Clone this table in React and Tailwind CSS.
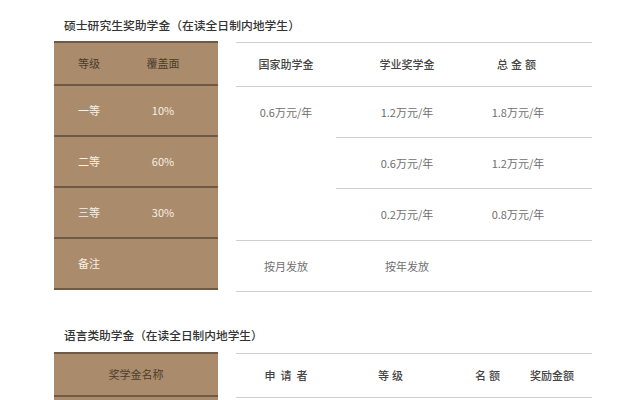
const font = { fontFamily: '"Noto Sans CJK SC", "Noto Sans", sans-serif' };

const grades = [
  { name: "一等", cover: "10%", study: "1.2万元/年", total: "1.8万元/年" },
  { name: "二等", cover: "60%", study: "0.6万元/年", total: "1.2万元/年" },
  { name: "三等", cover: "30%", study: "0.2万元/年", total: "0.8万元/年" },
];

function BrownRow({ left, right, head, tall }) {
  return (
    <div
      className={`flex items-center border-b-2 border-[#6e5a45] ${
        tall ? "h-[43px]" : "h-[51px]"
      } ${head ? "text-[#4b3c2d]" : "text-[#f6efe4]"}`}
    >
      <div className="w-[70px] text-center">{left}</div>
      <div className="w-[74px] ml-[2px] text-center">{right}</div>
    </div>
  );
}

export default function App() {
  return (
    <div
      className="w-[640px] h-[400px] overflow-hidden bg-white pl-[54px] pt-[16px]"
      style={font}
    >
      {/* 硕士研究生奖助学金 */}
      <h2 className="ml-[10px] text-[11.8px] leading-[18px] font-medium text-[#333]">
        硕士研究生奖助学金（在读全日制内地学生）
      </h2>

      <div className="mt-[7px] flex items-start text-[11px]">
        <div className="w-[164px] bg-[#aa8c6c] border-t-2 border-[#6e5a45]">
          <BrownRow left="等级" right="覆盖面" head tall />
          {grades.map((g) => (
            <BrownRow key={g.name} left={g.name} right={g.cover} />
          ))}
          <BrownRow left="备注" right="" />
        </div>

        <div className="ml-[18px] w-[356px] mt-[1px] border-t-[1.5px] border-[#cfcfcf] text-[#6f6f6f]">
          <div className="flex h-[44px] items-center border-b-[1.5px] border-[#cfcfcf] text-[#444] font-medium">
            <div className="w-[100px] text-center">国家助学金</div>
            <div className="w-[142px] text-center">学业奖学金</div>
            <div className="w-[80px] text-center tracking-[3px]">总金额</div>
          </div>

          <div className="flex border-b-[1.5px] border-[#cfcfcf]">
            <div className="w-[100px] pt-[17px] text-center">0.6万元/年</div>
            <div className="flex-1">
              {grades.map((g, i) => (
                <div
                  key={g.name}
                  className={`flex h-[51px] items-center ${
                    i < 2 ? "border-b-[1.5px] border-[#cfcfcf]" : ""
                  }`}
                >
                  <div className="w-[142px] text-center">{g.study}</div>
                  <div className="w-[80px] text-center">{g.total}</div>
                </div>
              ))}
            </div>
          </div>

          <div className="flex h-[51px] items-center border-b-[1.5px] border-[#cfcfcf]">
            <div className="w-[100px] text-center">按月发放</div>
            <div className="w-[142px] text-center">按年发放</div>
          </div>
        </div>
      </div>

      {/* 语言类助学金 */}
      <h2 className="mt-[34px] ml-[10px] text-[11.7px] leading-[18px] font-medium text-[#333]">
        语言类助学金（在读全日制内地学生）
      </h2>

      <div className="mt-[8px] flex items-start text-[11px]">
        <div className="w-[164px] bg-[#aa8c6c] border-t-2 border-[#6e5a45]">
          <div className="flex h-[43px] items-center justify-center border-b-2 border-[#6e5a45] text-[#4b3c2d]">
            奖学金名称
          </div>
          <div className="h-[51px]" />
        </div>

        <div className="ml-[18px] w-[356px] mt-[1px] border-t-[1.5px] border-[#cfcfcf]">
          <div className="flex h-[44px] items-center border-b-[1.5px] border-[#cfcfcf] text-[#444] font-medium">
            <div className="w-[100px] pl-[5px] text-center tracking-[5px]">申请者</div>
            <div className="w-[112px] text-center tracking-[3px]">等级</div>
            <div className="w-[82px] text-center tracking-[3px]">名额</div>
            <div className="w-[44px] text-center">奖励金额</div>
          </div>
        </div>
      </div>
    </div>
  );
}
